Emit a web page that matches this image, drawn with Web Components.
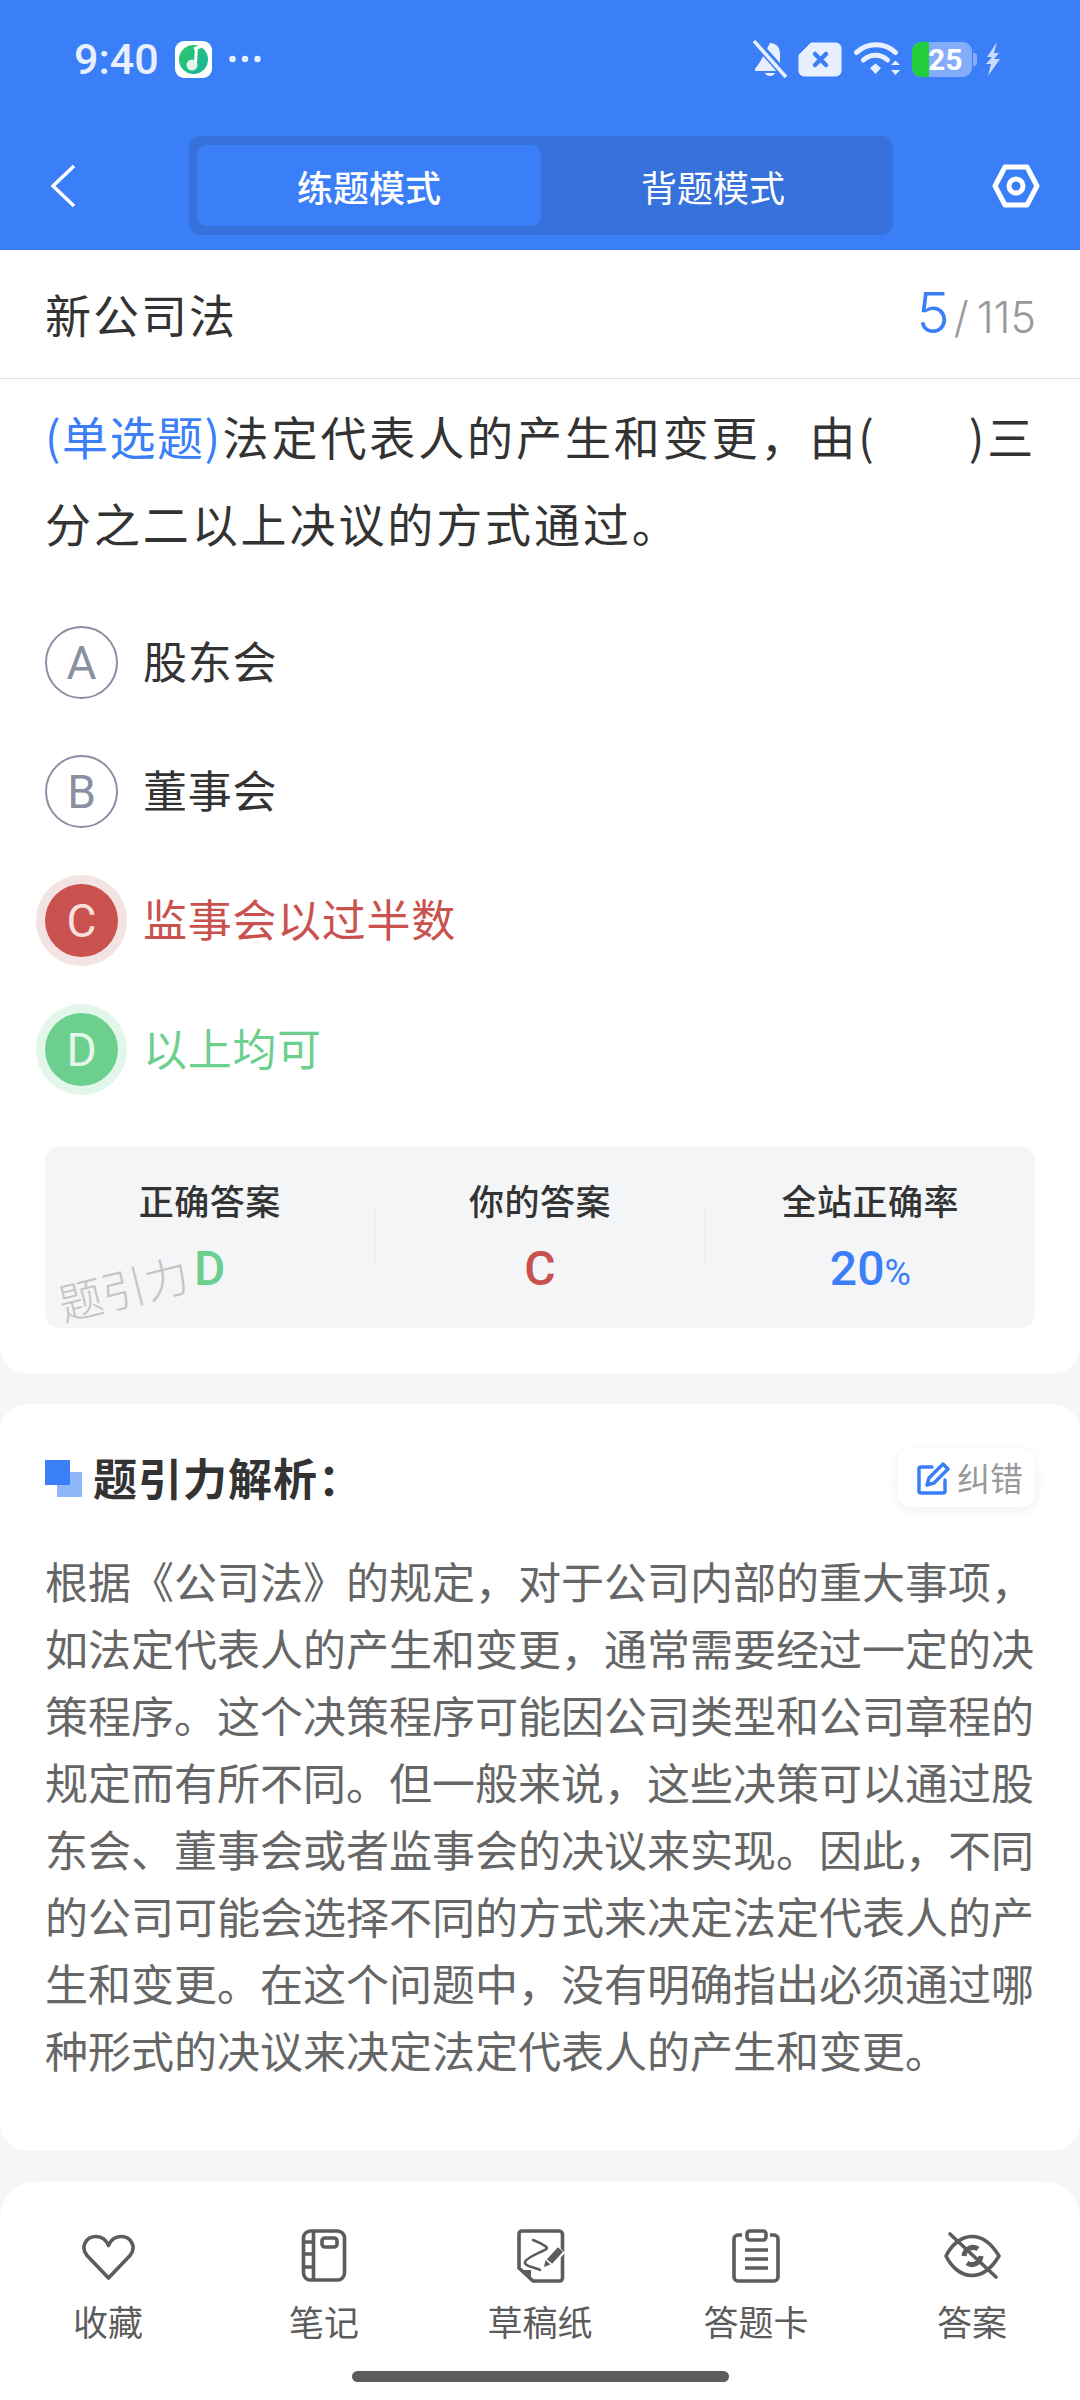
<!DOCTYPE html>
<html lang="zh">
<head>
<meta charset="utf-8">
<title>新公司法</title>
<style>
  html, body { margin: 0; padding: 0; }
  body {
    width: 1080px;
    height: 2400px;
    overflow: hidden;
    background: #f4f6f8;
    font-family: "Noto Sans CJK SC", Roboto, sans-serif;
    display: flex;
    flex-direction: column;
  }
</style>
</head>
<body>

<app-header></app-header>

<question-card title="新公司法" current="5" total="115">
  <answer-option letter="A">股东会</answer-option>
  <answer-option letter="B">董事会</answer-option>
  <answer-option letter="C" state="wrong">监事会以过半数</answer-option>
  <answer-option letter="D" state="right">以上均可</answer-option>
  <stat-panel slot="stats"></stat-panel>
</question-card>

<analysis-card>根据《公司法》的规定，对于公司内部的重大事项，如法定代表人的产生和变更，通常需要经过一定的决策程序。这个决策程序可能因公司类型和公司章程的规定而有所不同。但一般来说，这些决策可以通过股东会、董事会或者监事会的决议来实现。因此，不同的公司可能会选择不同的方式来决定法定代表人的产生和变更。在这个问题中，没有明确指出必须通过哪种形式的决议来决定法定代表人的产生和变更。</analysis-card>

<bottom-nav>
  <nav-item label="收藏" icon="heart"></nav-item>
  <nav-item label="笔记" icon="note"></nav-item>
  <nav-item label="草稿纸" icon="draft"></nav-item>
  <nav-item label="答题卡" icon="sheet"></nav-item>
  <nav-item label="答案" icon="eye"></nav-item>
</bottom-nav>

<script>
class StatusBar extends HTMLElement {
  constructor() {
    super();
    const shadowRoot = this.attachShadow({mode: 'open'});
    shadowRoot.innerHTML = `
      <style>
        :host { display: flex; align-items: center; height: 118px; padding: 0 79px 0 74px; color: #e8effe; box-sizing: border-box; }
        .time { font: 500 43px/1 Roboto, sans-serif; margin-right: 16px; }
        .left { display: flex; align-items: center; flex: 1; }
        .right { display: flex; align-items: center; }
        .batt { position: relative; margin-left: 12px; }
        .batt span { position: absolute; left: 16px; top: 0; font: 700 30px/35px Roboto, sans-serif; color: #fff; }
        svg { display: block; }
      </style>
      <div class="left">
        <span class="time">9:40</span>
        <svg width="37" height="37" viewBox="0 0 37 37">
          <defs><linearGradient id="g" x1="0" y1="0" x2="1" y2="1"><stop offset="0" stop-color="#2fc764"/><stop offset="1" stop-color="#14b5a0"/></linearGradient></defs>
          <rect width="37" height="37" rx="9" fill="#fff"/>
          <circle cx="18.500" cy="18.500" r="14.500" fill="url(#g)"/>
          <path d="M19 8l8-3 M21.500 6.500l-1 16" stroke="#fff" stroke-width="3" fill="none"/>
          <circle cx="17" cy="24" r="5.500" fill="#e3f5ec"/>
        </svg>
        <svg style="margin-left:17px" width="32" height="8" viewBox="0 0 32 8" fill="#e8effe">
          <circle cx="3.500" cy="4" r="3.200"/><circle cx="16" cy="4" r="3.200"/><circle cx="28.500" cy="4" r="3.200"/>
        </svg>
      </div>
      <div class="right">
        <svg width="36" height="40" viewBox="0 0 36 40" fill="#e8effe">
          <path d="M18 4c7 0 10 5 10 11v9l4 6v2H3v-2l5-7z"/>
          <path d="M13 34h10c-1 4-9 4-10 0z"/>
          <path d="M2 1l33 37" stroke="#3b7ff8" stroke-width="8"/>
          <path d="M2 2l32 36" stroke="#e8effe" stroke-width="3.500"/>
        </svg>
        <svg style="margin-left:10px" width="44" height="35" viewBox="0 0 44 35">
          <path d="M13 1h25a5 5 0 0 1 5 5v23a5 5 0 0 1-5 5H6a5 5 0 0 1-5-5V13z" fill="#e8effe" stroke="#e8effe" stroke-linejoin="round" stroke-width="1"/>
          <path d="M17 12l11 11M28 12L17 23" stroke="#3b7ff8" stroke-width="4.500" stroke-linecap="round"/>
        </svg>
        <svg style="margin-left:12px" width="46" height="36" viewBox="0 0 46 36" fill="none" stroke="#e8effe" stroke-linecap="round">
          <path d="M2.500 11.500C13 1 31 1 41.500 11.500" stroke-width="5"/>
          <path d="M9.500 19c7-6.500 17-6.500 24 0" stroke-width="5"/>
          <path d="M16 27l5.500-4.500L27 27l-5.500 6z" fill="#e8effe" stroke="none"/>
          <path d="M37 24l4.500-4.500L46 24z M37 29l4.500 5 4.500-5z" fill="#e8effe" stroke="none"/>
        </svg>
        <div class="batt">
          <svg width="66" height="35" viewBox="0 0 66 35">
            <rect x="0" y="0" width="60" height="35" rx="9" fill="#e8effe" fill-opacity=".42"/>
            <path d="M61 11h1a3 3 0 0 1 3 3v7a3 3 0 0 1-3 3h-1z" fill="#e8effe" fill-opacity=".42"/>
            <path d="M9 0h8v35H9a9 9 0 0 1-9-9V9a9 9 0 0 1 9-9z" fill="#22ce3c"/>
          </svg>
          <span>25</span>
        </div>
        <svg style="margin-left:7px" width="16" height="34" viewBox="0 0 16 34" fill="#c9dafc">
          <path d="M12 0L2 15h5l-6 7h5L3 34l12-17H9l5-6H9z"/>
        </svg>
      </div>
    `;
  }
}

class ModeTabs extends HTMLElement {
  constructor() {
    super();
    const shadowRoot = this.attachShadow({mode: 'open'});
    shadowRoot.innerHTML = `
      <style>
        :host { display: flex; width: 704px; height: 99px; padding: 9px 8px; box-sizing: border-box; background: #3671dc; border-radius: 12px; color: #fff; flex: none; }
        div { flex: 1; display: flex; align-items: center; justify-content: center; font-size: 36px; border-radius: 10px; }
        .on { background: #3b7ff8; font-weight: 500; }
      </style>
      <div class="on">练题模式</div>
      <div>背题模式</div>
    `;
  }
}

class AppHeader extends HTMLElement {
  constructor() {
    super();
    const shadowRoot = this.attachShadow({mode: 'open'});
    shadowRoot.innerHTML = `
      <style>
        :host { display: block; height: 250px; background: #3b7ff8; flex: none; }
        .bar { display: flex; align-items: center; height: 99px; margin-top: 18px; padding: 0 38px 0 50px; }
        mode-tabs { margin-left: 113px; margin-right: auto; }
        svg { display: block; flex: none; }
      </style>
      <status-bar></status-bar>
      <div class="bar">
        <svg width="26" height="44" viewBox="0 0 26 44" fill="none" stroke="#fff" stroke-width="3.500"><path d="M24 2L3 22l21 20"/></svg>
        <mode-tabs></mode-tabs>
        <svg width="52" height="46" viewBox="0 0 52 46" fill="none" stroke="#fff" stroke-width="5" stroke-linejoin="round">
          <path d="M15 4h22l10 19-10 19H15L5 23z"/>
          <circle cx="26" cy="23" r="7"/>
        </svg>
      </div>
    `;
  }
}

class AnswerOption extends HTMLElement {
  constructor() {
    super();
    const shadowRoot = this.attachShadow({mode: 'open'});
    const state = this.getAttribute('state') || 'idle';
    shadowRoot.innerHTML = `
      <style>
        :host { display: flex; align-items: center; height: 73px; font-size: 44px; letter-spacing: .7px; color: #333; }
        .dot { width: 73px; height: 73px; box-sizing: border-box; border-radius: 50%; flex: none; display: flex; align-items: center; justify-content: center; font: 400 46px/1 Roboto, sans-serif; letter-spacing: 0; margin-right: 25px; }
        .idle { border: 2px solid #8b8fa3; color: #8b8fa3; }
        .wrong { background: #c9524e; color: #f6dfde; box-shadow: 0 0 0 9px #f4e3e3; }
        .right { background: #6dcf8d; color: #e4f7ea; box-shadow: 0 0 0 9px #e2f6e9; }
        .txt { margin-bottom: 6px; }
        .txt-wrong { color: #c9524e; }
        .txt-right { color: #6dcf8d; }
      </style>
      <div class="dot ${state}">${this.getAttribute('letter')}</div>
      <span class="txt txt-${state}"><slot></slot></span>
    `;
  }
}

class StatItem extends HTMLElement {
  constructor() {
    super();
    const shadowRoot = this.attachShadow({mode: 'open'});
    shadowRoot.innerHTML = `
      <style>
        :host { display: flex; flex-direction: column; align-items: center; flex: 1; position: relative; }
        .l { font-size: 35px; letter-spacing: .5px; font-weight: 500; color: #333; line-height: 50px; margin-top: 28px; }
        .v { font: 500 48px/60px Roboto, sans-serif; margin-top: 14px; }
      </style>
      <div class="l">${this.getAttribute('label')}</div>
      <div class="v" style="color:${this.getAttribute('color')}"><slot></slot></div>
    `;
  }
}

class StatPanel extends HTMLElement {
  constructor() {
    super();
    const shadowRoot = this.attachShadow({mode: 'open'});
    shadowRoot.innerHTML = `
      <style>
        :host { display: block; height: 181px; background: #f4f5f7; border-radius: 14px; position: relative; }
        .row { display: flex; height: 100%; align-items: flex-start; }
        .sep { width: 1px; height: 60px; background: #e6e8eb; margin-top: 60px; flex: none; }
        .mark { position: absolute; left: 12px; top: 118px; font-size: 44px; color: #c4c4c4; transform: rotate(-14deg); font-weight: 300; line-height: 1; }
        small { font-size: 36px; font-weight: 400; }
      </style>
      <div class="row">
        <stat-item label="正确答案" color="#6dcf8d">D</stat-item>
        <div class="sep"></div>
        <stat-item label="你的答案" color="#c9524e">C</stat-item>
        <div class="sep"></div>
        <stat-item label="全站正确率" color="#3b7ff8">20<small>%</small></stat-item>
      </div>
      <div class="mark">题引力</div>
    `;
  }
}

class QuestionCard extends HTMLElement {
  constructor() {
    super();
    const shadowRoot = this.attachShadow({mode: 'open'});
    shadowRoot.innerHTML = `
      <style>
        :host { display: block; height: 1124px; background: #fff; border-radius: 0 0 28px 28px; flex: none; }
        .top { display: flex; align-items: center; justify-content: space-between; height: 129px; padding: 0 44px 2px 45px; box-sizing: border-box; border-bottom: 1px solid #e2e2e2; }
        .name { font-size: 46px; letter-spacing: 2px; color: #333; }
        .count { font: 300 43px/1 Inter, sans-serif; color: #999; display: flex; align-items: baseline; }
        .count b { font-weight: 300; font-size: 56px; color: #3b7ff8; margin-right: 4px; }
        .count i { font-style: normal; margin-right: 8px; }
        .q { margin: 13px 40px 0 45px; font-size: 46px; letter-spacing: 2.900px; line-height: 87px; color: #333; white-space: nowrap; }
        .q em { font-style: normal; color: #3b7ff8; letter-spacing: 1.500px; margin-right: 1px; }
        .q span { letter-spacing: 0; }
        .opts { display: flex; flex-direction: column; gap: 56px; margin: 60px 45px 0; }
        .stats { margin: 61px 45px 0; }
      </style>
      <div class="top">
        <div class="name">${this.getAttribute('title')}</div>
        <div class="count"><b>${this.getAttribute('current')}</b><i>/</i>${this.getAttribute('total')}</div>
      </div>
      <div class="q">
        <div><em>(单选题)</em>法定代表人的产生和变更，由(<span>　　</span>)三</div>
        <div>分之二以上决议的方式通过。</div>
      </div>
      <div class="opts"><slot></slot></div>
      <div class="stats"><slot name="stats"></slot></div>
    `;
  }
}

class AnalysisCard extends HTMLElement {
  constructor() {
    super();
    const shadowRoot = this.attachShadow({mode: 'open'});
    shadowRoot.innerHTML = `
      <style>
        :host { display: block; height: 747px; margin-top: 30px; background: #fff; border-radius: 28px; padding: 45px 45px 0; box-sizing: border-box; flex: none; }
        .head { display: flex; align-items: center; height: 58px; }
        .head h3 { margin: -3px 0 0 11px; font-size: 44px; font-weight: 700; color: #333; flex: 1; letter-spacing: 1px; }
        .fix { display: flex; align-items: center; width: 138px; height: 58px; box-sizing: border-box; padding-left: 20px; border-radius: 14px; background: #fff; box-shadow: 0 3px 12px rgba(0,0,0,.07); font-size: 33px; color: #999; gap: 7px; }
        .fix span { margin-top: -2px; }
        .body { margin-top: 40px; font-size: 43px; line-height: 67px; color: #666; }
        svg { display: block; flex: none; }
      </style>
      <div class="head">
        <svg width="37" height="37" viewBox="0 0 37 37"><rect x="12" y="12" width="25" height="25" fill="#8fb8fb"/><rect width="25" height="25" fill="#3b7ff8"/></svg>
        <h3>题引力解析：</h3>
        <div class="fix">
          <svg width="33" height="33" viewBox="0 0 33 33" fill="none" stroke="#3b7ff8" stroke-width="3.500" stroke-linecap="round" stroke-linejoin="round">
            <path d="M15 5H4a2 2 0 0 0-2 2v22a2 2 0 0 0 2 2h22a2 2 0 0 0 2-2V18"/>
            <path d="M26 2l5 5-14 14-7 2 2-7z"/>
          </svg>
          <span>纠错</span>
        </div>
      </div>
      <div class="body"><slot></slot></div>
    `;
  }
}

const NAV_ICONS = {
  heart: `<path d="M29.500 49L8 26.500C1 18 7 7.500 17 7.500c5 0 10 3 12.500 9 2.500-6 7.500-9 12.500-9 10 0 16 10.500 9 19z"/>`,
  note: `<rect x="8.500" y="2" width="41" height="49" rx="7"/><path d="M18.500 2v49M8.500 13h10M8.500 25h10M8.500 38h10"/><rect x="27" y="9" width="15" height="9" rx="3"/>`,
  draft: `<path d="M11 2h37a3.500 3.500 0 0 1 3.500 3.500V49a3 3 0 0 1-3 3H22L8 39V5a3 3 0 0 1 3-3z"/><path d="M9 41h11v11z" fill="#5c5c5c" stroke="none"/><path d="M22 11c5 2 13 6 14 8s-21 9-22 14 11 5 15 8" stroke-width="2.500" stroke-linecap="round"/><path d="M39 32l11-12" stroke="#fff" stroke-width="11"/><path d="M38.500 32.500l11-12" stroke-width="7"/><path d="M33 38l1.500-7 5 4.500z" fill="#5c5c5c" stroke="none"/>`,
  sheet: `<path d="M15 6h-4a4 4 0 0 0-4 4v38a4 4 0 0 0 4 4h36a4 4 0 0 0 4-4V10a4 4 0 0 0-4-4h-4"/><rect x="20" y="2" width="19" height="9" rx="3"/><path d="M18 21h23M18 30h23M18 39h23"/>`,
  eye: `<path d="M3 27C8 17 17 7.500 29 7.500S50 17 56 27C50 37 41 46.500 29 46.500S8 37 3 27z"/><path d="M21 27a9 9 0 0 1 14-7M38 27a9 9 0 0 1-14 7" stroke-width="5"/><path d="M7 5l46 43" stroke-linecap="round"/>`
};

class NavItem extends HTMLElement {
  constructor() {
    super();
    const shadowRoot = this.attachShadow({mode: 'open'});
    const name = this.getAttribute('icon');
    shadowRoot.innerHTML = `
      <style>
        :host { display: flex; flex-direction: column; align-items: center; flex: 1; color: #5c5c5c; }
        svg { display: block; }
        span { font-size: 35px; line-height: 46px; margin-top: 15px; }
      </style>
      <svg width="58" height="54" viewBox="0 0 58 54" fill="none" stroke="#5c5c5c" stroke-width="3.600" stroke-linejoin="round">${NAV_ICONS[name]}</svg>
      <span>${this.getAttribute('label')}</span>
    `;
  }
}

class BottomNav extends HTMLElement {
  constructor() {
    super();
    const shadowRoot = this.attachShadow({mode: 'open'});
    shadowRoot.innerHTML = `
      <style>
        :host { display: flex; height: 218px; margin-top: 31px; padding-top: 47px; box-sizing: border-box; background: #fff; border-radius: 36px 36px 0 0; position: relative; flex: none; }
        .pill { position: absolute; left: 352px; bottom: 18px; width: 377px; height: 11px; border-radius: 6px; background: #5c5c5c; }
      </style>
      <slot></slot>
      <div class="pill"></div>
    `;
  }
}

customElements.define('status-bar', StatusBar);
customElements.define('mode-tabs', ModeTabs);
customElements.define('app-header', AppHeader);
customElements.define('answer-option', AnswerOption);
customElements.define('stat-item', StatItem);
customElements.define('stat-panel', StatPanel);
customElements.define('question-card', QuestionCard);
customElements.define('analysis-card', AnalysisCard);
customElements.define('nav-item', NavItem);
customElements.define('bottom-nav', BottomNav);
</script>
</body>
</html>
